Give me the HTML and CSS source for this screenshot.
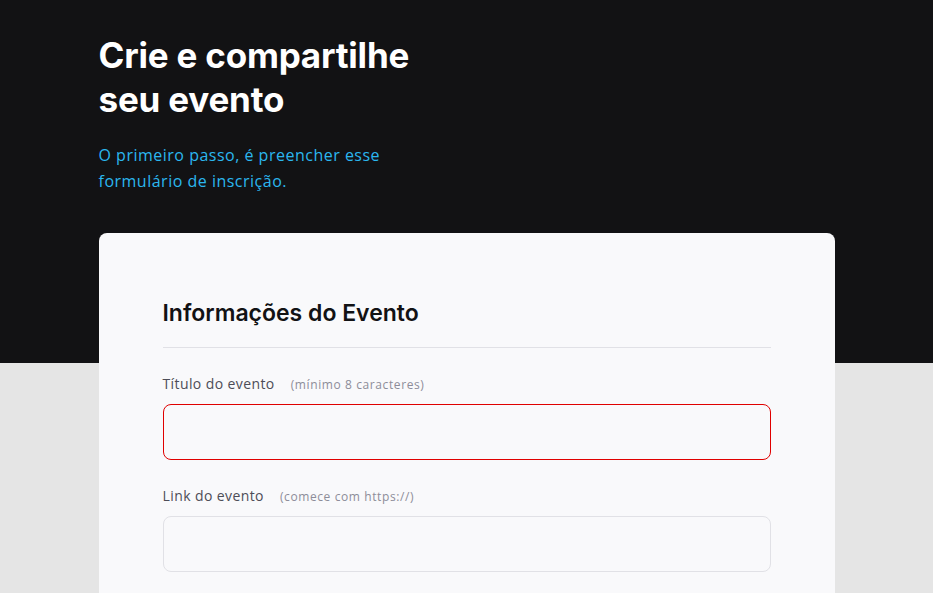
FILE: index.html
```html
<!DOCTYPE html>
<html lang="pt-BR">
<head>
<meta charset="utf-8">
<link rel="stylesheet" href="styles.css">
</head>
<body>
<header class="hero">
  <div class="hero-inner">
    <h1 class="hero-title">Crie e compartilhe<br>seu evento</h1>
    <p class="hero-sub">O primeiro passo, é preencher esse<br>formulário de inscrição.</p>
  </div>
</header>
<main class="main">
  <form class="card">
    <h2 class="card-title">Informações do Evento</h2>
    <div class="field">
      <label class="label">Título do evento <span class="hint">(mínimo 8 caracteres)</span></label>
      <input class="input input-error" type="text">
    </div>
    <div class="field">
      <label class="label">Link do evento <span class="hint">(comece com https://)</span></label>
      <input class="input" type="text">
    </div>
  </form>
</main>
</body>
</html>
```
FILE: styles.css
```css
* { box-sizing: border-box; }
html, body { margin: 0; padding: 0; }
body {
  background: #e5e5e5;
  font-family: "Open Sans", "Noto Sans", sans-serif;
  height: 593px;
  overflow: hidden;
}
.hero {
  background: #121214;
  height: 363px;
}
.hero-inner {
  width: 736px;
  margin: 0 auto;
  padding-top: 33px;
}
.hero-title {
  margin: 0;
  color: #ffffff;
  font-family: Inter, "Liberation Sans", sans-serif;
  font-weight: 700;
  font-size: 35px;
  line-height: 44px;
  letter-spacing: -0.2px;
}
.hero-sub {
  margin: 21px 0 0;
  color: #2bb7ef;
  font-size: 16px;
  line-height: 26px;
  letter-spacing: 0.5px;
}
.main {
  margin-top: -130px;
}
.card {
  width: 736px;
  margin: 0 auto;
  background: #f9f9fb;
  border-radius: 8px 8px 0 0;
  padding: 64px 64px 0;
  height: 360px;
}
.card-title {
  margin: 0;
  padding-bottom: 18px;
  border-bottom: 1px solid #e1e1e6;
  font-family: Inter, "Liberation Sans", sans-serif;
  font-weight: 600;
  font-size: 23px;
  line-height: 32px;
  color: #121214;
}
.field {
  display: flex;
  flex-direction: column;
  margin-top: 24px;
}
.label {
  color: #4d4d57;
  font-size: 14px;
  line-height: 24px;
  margin-bottom: 7px;
  letter-spacing: 0.4px;
}
.hint {
  color: #8d8d99;
  font-size: 12px;
  margin-left: 12px;
  letter-spacing: 0.6px;
}
.input {
  height: 56px;
  border: 1px solid #e1e1e6;
  border-radius: 8px;
  background: #f9f9fb;
  outline: none;
  padding: 0 16px;
}
.input-error {
  border-color: #e00000;
}
```
